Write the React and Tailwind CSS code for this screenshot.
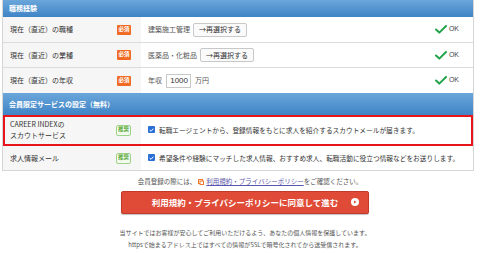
import React from 'react';

const jp = { fontFamily: '"Noto Sans CJK JP", "Noto Sans", sans-serif' };

function Required() {
  return (
    <span className="inline-flex h-[10px] w-[14px] items-center justify-center rounded-[1px] bg-[#f06a24] text-[5.5px] font-bold leading-none text-white">
      必須
    </span>
  );
}

function Recommended() {
  return (
    <span className="inline-flex h-[11px] w-[15px] items-center justify-center rounded-[2px] border border-[#9fd38a] bg-[#f2faee] text-[5.5px] font-bold leading-none text-[#5aa83b]">
      推奨
    </span>
  );
}

function Ok() {
  return (
    <div className="flex items-center gap-[2px] pr-[14px]">
      <svg width="12" height="9" viewBox="0 0 12 9">
        <path d="M1 4.5 L4.3 7.6 L11 1" fill="none" stroke="#23a34a" strokeWidth="2" strokeLinecap="round" strokeLinejoin="round" />
      </svg>
      <span className="text-[7px] text-[#444]" style={{ fontFamily: '"Liberation Sans", sans-serif' }}>OK</span>
    </div>
  );
}

function Reselect() {
  return (
    <span className="ml-[3px] inline-flex h-[14px] items-center rounded-[2px] border border-[#c8c8c8] bg-[#fafafa] px-[5px] text-[7px] text-[#333]">
      →再選択する
    </span>
  );
}

function Header({ children, h }) {
  return (
    <div className={`flex items-center bg-gradient-to-b from-[#6aa6da] to-[#3f84c6] pl-[6px] text-[7px] font-bold text-white ${h}`}>
      {children}
    </div>
  );
}

function Row({ label, badge, h, children, last }) {
  return (
    <div className={`flex ${h} ${last ? '' : 'border-b border-[#dcdcdc]'}`}>
      <div className="flex w-[138px] items-center justify-between bg-[#f6f6f6] pl-[7px] pr-[10px] text-[7px] leading-[11px] text-[#333]">
        <div>{label}</div>
        {badge}
      </div>
      <div className="flex flex-1 items-center justify-between bg-white pl-[7px] text-[7px] text-[#555]">
        {children}
      </div>
    </div>
  );
}

function Check() {
  return (
    <span className="mr-[4px] inline-flex h-[7px] w-[7px] shrink-0 items-center justify-center rounded-[1px] bg-[#2a6fd6]">
      <svg width="5" height="4" viewBox="0 0 5 4">
        <path d="M0.6 2 L2 3.3 L4.4 0.7" fill="none" stroke="white" strokeWidth="1" />
      </svg>
    </span>
  );
}

export default function App() {
  return (
    <div className="h-[253px] w-[480px] overflow-hidden bg-white" style={jp}>
      <div className="ml-[2px] w-[472px] border-x border-b border-[#d6d6d6]">
        <Header h="h-[17px]">職務経験</Header>
        <Row label="現在（直近）の職種" badge={<Required />} h="h-[26px]">
          <div className="flex items-center">
            建築施工管理
            <Reselect />
          </div>
          <Ok />
        </Row>
        <Row label="現在（直近）の業種" badge={<Required />} h="h-[25px]">
          <div className="flex items-center">
            医薬品・化粧品
            <Reselect />
          </div>
          <Ok />
        </Row>
        <Row label="現在（直近）の年収" badge={<Required />} h="h-[25px]" last>
          <div className="flex items-center">
            年収
            <span className="mx-[4px] inline-flex h-[14px] w-[25px] items-center justify-end border border-[#c8c8c8] pr-[2px] text-[8px] text-[#333]" style={{ fontFamily: '"Liberation Sans", sans-serif' }}>
              1000
            </span>
            万円
          </div>
          <Ok />
        </Row>
        <Header h="h-[22px]">会員限定サービスの設定（無料）</Header>
        <div className="relative">
          <Row label={<>CAREER INDEXの<br />スカウトサービス</>} badge={<Recommended />} h="h-[31px]">
            <div className="flex items-center whitespace-nowrap text-[6.7px] text-[#333]">
              <Check />
              転職エージェントから、登録情報をもとに求人を紹介するスカウトメールが届きます。
            </div>
          </Row>
          <div className="pointer-events-none absolute inset-x-0 top-0 h-[31px] border-2 border-[#e8141b]" />
        </div>
        <Row label="求人情報メール" badge={<Recommended />} h="h-[24px]" last>
          <div className="flex items-center whitespace-nowrap text-[6.7px] text-[#333]">
            <Check />
            希望条件や経験にマッチした求人情報、おすすめ求人、転職活動に役立つ情報などをお送りします。
          </div>
        </Row>
      </div>

      <div className="mt-[6px] flex items-center justify-center pl-[20px] text-[6.5px] text-[#555]">
        会員登録の際には、
        <svg className="mx-[2px]" width="6" height="6" viewBox="0 0 6 6">
          <rect x="0.5" y="0.5" width="4" height="4" fill="none" stroke="#f07a2a" strokeWidth="1" />
          <rect x="2" y="2" width="3.5" height="3.5" fill="white" stroke="#f07a2a" strokeWidth="1" />
        </svg>
        <span className="text-[#5a55a8] underline">利用規約・プライバシーポリシー</span>
        をご確認ください。
      </div>

      <div className="mt-[4px] flex justify-center pl-[10px]">
        <div className="relative flex h-[23px] w-[248px] items-center justify-center rounded-[2px] border border-[#c23a2a] bg-[#e04b37] text-[8.5px] font-bold text-white shadow-[0_1px_1px_rgba(0,0,0,0.25)]">
          利用規約・プライバシーポリシーに同意して進む
          <span className="absolute right-[9px] top-1/2 flex h-[8px] w-[8px] -translate-y-1/2 items-center justify-center rounded-full bg-white">
            <svg width="4" height="4" viewBox="0 0 4 4">
              <path d="M1 0.5 L3.5 2 L1 3.5 Z" fill="#e04b37" />
            </svg>
          </span>
        </div>
      </div>

      <div className="mt-[13px] flex flex-col items-center pl-[10px] text-[6px] leading-[12px] text-[#555]">
        <div>当サイトではお客様が安心してご利用いただけるよう、あなたの個人情報を保護しています。</div>
        <div>httpsで始まるアドレス上ではすべての情報がSSLで暗号化されてから送受信されます。</div>
      </div>
    </div>
  );
}
